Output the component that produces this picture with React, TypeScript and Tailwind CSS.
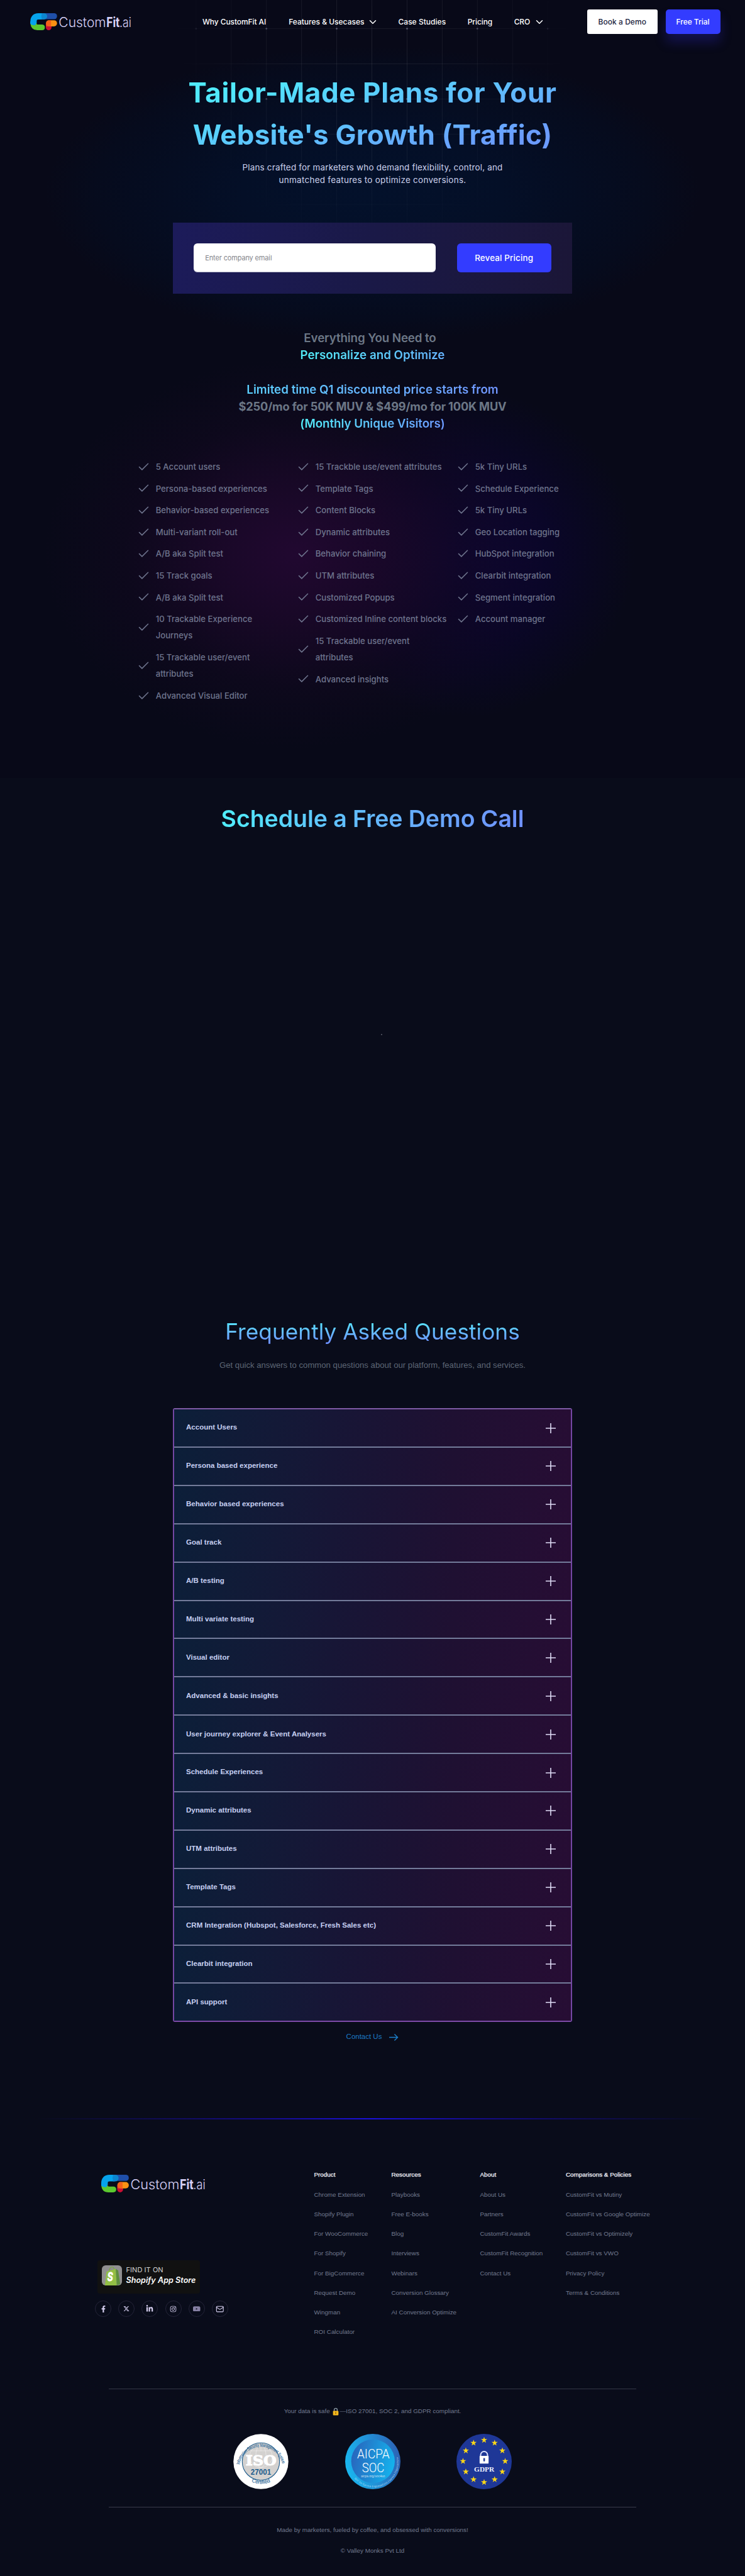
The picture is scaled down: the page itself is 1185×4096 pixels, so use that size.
import React from "react";
import { FaFacebookF, FaLinkedinIn, FaInstagram } from "react-icons/fa";
import { FaXTwitter } from "react-icons/fa6";
import { Check, ChevronDown, Mail } from "lucide-react";

const features: string[][][] = [
  [
    ["5 Account users"],
    ["Persona-based experiences"],
    ["Behavior-based experiences"],
    ["Multi-variant roll-out"],
    ["A/B aka Split test"],
    ["15 Track goals"],
    ["A/B aka Split test"],
    ["10 Trackable Experience", "Journeys"],
    ["15 Trackable user/event", "attributes"],
    ["Advanced Visual Editor"],
  ],
  [
    ["15 Trackble use/event attributes"],
    ["Template Tags"],
    ["Content Blocks"],
    ["Dynamic attributes"],
    ["Behavior chaining"],
    ["UTM attributes"],
    ["Customized Popups"],
    ["Customized Inline content blocks"],
    ["15 Trackable user/event", "attributes"],
    ["Advanced insights"],
  ],
  [
    ["5k Tiny URLs"],
    ["Schedule Experience"],
    ["5k Tiny URLs"],
    ["Geo Location tagging"],
    ["HubSpot integration"],
    ["Clearbit integration"],
    ["Segment integration"],
    ["Account manager"],
  ],
];

const faqs = [
  "Account Users",
  "Persona based experience",
  "Behavior based experiences",
  "Goal track",
  "A/B testing",
  "Multi variate testing",
  "Visual editor",
  "Advanced & basic insights",
  "User journey explorer & Event Analysers",
  "Schedule Experiences",
  "Dynamic attributes",
  "UTM attributes",
  "Template Tags",
  "CRM Integration (Hubspot, Salesforce, Fresh Sales etc)",
  "Clearbit integration",
  "API support",
];

const footerColumns = [
  {
    title: "Product",
    width: "w-[123px]",
    links: ["Chrome Extension", "Shopify Plugin", "For WooCommerce", "For Shopify", "For BigCommerce", "Request Demo", "Wingman", "ROI Calculator"],
  },
  {
    title: "Resources",
    width: "w-[141px]",
    links: ["Playbooks", "Free E-books", "Blog", "Interviews", "Webinars", "Conversion Glossary", "AI Conversion Optimize"],
  },
  {
    title: "About",
    width: "w-[136.5px]",
    links: ["About Us", "Partners", "CustomFit Awards", "CustomFit Recognition", "Contact Us"],
  },
  {
    title: "Comparisons & Policies",
    width: "w-[160px]",
    links: ["CustomFit vs Mutiny", "CustomFit vs Google Optimize", "CustomFit vs Optimizely", "CustomFit vs VWO", "Privacy Policy", "Terms & Conditions"],
  },
];

function Logo({ className }: { className: string }) {
  return (
    <svg viewBox="0 0 606 104" className={className + " overflow-visible"} aria-label="CustomFit.ai">
      <path d="M78 19H48Q19 19 19 50V60" fill="none" stroke="#06a3ec" strokeWidth="38" />
      <path d="M0 60H38Q36 68 46 68H70Q87 68 87 85T70 102H42Q4 102 0 60Z" fill="#5cc82f" />
      <path d="M0 62V50H34V62Q34 74 20 72Q4 70 0 62Z" fill="#06a3ec" />
      <rect x="68" y="0" width="92" height="36" rx="17" fill="#1f4fa9" />
      <path d="M68 0H82A18 18 0 0 1 82 38H68Z" fill="#0c86cf" />
      <path d="M93 62H127V85A17 17 0 0 1 93 85Z" fill="#cb0f33" />
      <rect x="94" y="42" width="66" height="37" rx="18" fill="#fb9113" />
      <path d="M112 42H124V79H94V60A18 18 0 0 1 112 42Z" fill="#f3511d" opacity="0.75" />
      <g fill="#d6d0f6" fontFamily="Inter, sans-serif" fontSize="80">
        <text x="170" y="83" textLength="284" lengthAdjust="spacingAndGlyphs" fontWeight="300">Custom</text>
        <text x="456" y="83" textLength="80" lengthAdjust="spacingAndGlyphs" fontWeight="700">Fit</text>
        <text x="534" y="83" textLength="71" lengthAdjust="spacingAndGlyphs" fontWeight="300">.ai</text>
      </g>
    </svg>
  );
}

function HeroGrid() {
  const xs = Array.from({ length: 12 }, (_, i) => 256 + i * 55.92);
  const ys = Array.from({ length: 8 }, (_, i) => 45.6 + i * 55.9);
  return (
    <svg className="absolute inset-x-0 top-0 h-[420px] w-full" viewBox="0 0 1185 420" aria-hidden="true">
      <defs>
        <radialGradient id="gridFade" gradientUnits="userSpaceOnUse" cx="592" cy="70" r="330">
          <stop offset="0" stopColor="#fff" />
          <stop offset="0.5" stopColor="#fff" stopOpacity="0.7" />
          <stop offset="1" stopColor="#fff" stopOpacity="0" />
        </radialGradient>
        <mask id="gridMask">
          <rect width="1185" height="420" fill="url(#gridFade)" />
        </mask>
      </defs>
      <g mask="url(#gridMask)">
        {xs.map((x) => (
          <path key={x} d={`M${x} 0V400`} stroke="#fff" strokeOpacity="0.09" />
        ))}
        {ys.map((y) => (
          <path key={y} d={`M250 ${y}H935`} stroke="#fff" strokeOpacity="0.08" />
        ))}
        {xs.filter((_, i) => i % 2 === 1).map((x) =>
          ys.filter((_, j) => j % 2 === 0).map((y) => <circle key={`${x}-${y}`} cx={x} cy={y} r="1.4" fill="#b9b6d8" fillOpacity="0.5" />),
        )}
      </g>
    </svg>
  );
}

function IsoBadge() {
  return (
    <svg viewBox="0 0 320 320" className="size-[88px]" aria-label="ISO 27001 certified">
      <defs>
        <path id="isoTop" d="M36 178A126 126 0 0 1 284 178" />
        <path id="isoBottom" d="M60 244A134 134 0 0 0 260 244" />
      </defs>
      <circle cx="160" cy="160" r="159" fill="#fff" />
      <circle cx="160" cy="160" r="108" fill="#d3d1cf" stroke="#1d5c8c" strokeWidth="4" />
      <g fill="none" stroke="#fff" strokeOpacity="0.5" strokeWidth="3">
        <ellipse cx="160" cy="130" rx="30" ry="65" />
        <ellipse cx="160" cy="130" rx="65" ry="65" />
        <path d="M160 65V100M103 98H217" />
      </g>
      <text x="72" y="180" textLength="178" lengthAdjust="spacingAndGlyphs" fill="#fff" stroke="#fff" strokeWidth="4" fontFamily="'DejaVu Serif', serif" fontWeight="700" fontSize="82">ISO</text>
      <text x="101" y="237" textLength="118" lengthAdjust="spacingAndGlyphs" fill="#1d5c8c" fontFamily="'Liberation Sans', sans-serif" fontWeight="700" fontSize="44">27001</text>
      <g fill="#2c6796" stroke="#2c6796" strokeWidth="0.6" fontFamily="'Liberation Sans', sans-serif">
        <text fontSize="27">
          <textPath href="#isoTop" textLength="345" lengthAdjust="spacingAndGlyphs">Information Security Management System</textPath>
        </text>
        <text fontSize="30">
          <textPath href="#isoBottom" startOffset="50%" textAnchor="middle">Certified</textPath>
        </text>
      </g>
    </svg>
  );
}

function AicpaBadge() {
  return (
    <svg viewBox="0 0 320 320" className="size-[88px]" aria-label="AICPA SOC">
      <defs>
        <linearGradient id="aicpaOuter" x1="0" y1="0.6" x2="1" y2="0.4">
          <stop offset="0" stopColor="#19b8f0" />
          <stop offset="0.5" stopColor="#228fd6" />
          <stop offset="1" stopColor="#2c62b4" />
        </linearGradient>
        <linearGradient id="aicpaInner" x1="0" y1="0.4" x2="1" y2="0.6">
          <stop offset="0" stopColor="#2866bd" />
          <stop offset="1" stopColor="#14b4ee" />
        </linearGradient>
        <path id="aicpaArc" d="M55 258A144 144 0 0 0 303 125" />
      </defs>
      <circle cx="160" cy="160" r="160" fill="url(#aicpaOuter)" />
      <circle cx="161" cy="158" r="126" fill="url(#aicpaInner)" />
      <g fill="#fff" fontFamily="Roboto, sans-serif" fontWeight="300">
        <text x="69" y="140" textLength="188" lengthAdjust="spacingAndGlyphs" fontSize="74">AICPA</text>
        <text x="97" y="222" textLength="130" lengthAdjust="spacingAndGlyphs" fontSize="74">SOC</text>
        <text x="92" y="252" textLength="138" lengthAdjust="spacingAndGlyphs" fontSize="18">aicpa.org/soc4so</text>
        <text fontSize="14" opacity="0.85">
          <textPath href="#aicpaArc" textLength="380">SOC for Service Organizations | Service Organizations</textPath>
        </text>
      </g>
    </svg>
  );
}

function GdprBadge() {
  const star = Array.from({ length: 10 }, (_, i) => {
    const r = i % 2 === 0 ? 19 : 7.5;
    const a = (Math.PI / 5) * i - Math.PI / 2;
    return `${(r * Math.cos(a)).toFixed(2)},${(r * Math.sin(a)).toFixed(2)}`;
  }).join(" ");
  return (
    <svg viewBox="0 0 320 320" className="size-[88px]" aria-label="GDPR compliant">
      <circle cx="160" cy="160" r="160" fill="#1e3797" />
      {Array.from({ length: 12 }, (_, i) => {
        const a = (Math.PI / 6) * i;
        return <polygon key={i} points={star} fill="#ffd816" transform={`translate(${160 + 122 * Math.sin(a)} ${158 - 122 * Math.cos(a)})`} />;
      })}
      <path d="M140 130V122A20 20 0 0 1 180 122V130" fill="none" stroke="#dfe4ff" strokeWidth="7" />
      <rect x="134" y="127" width="52" height="45" rx="3" fill="#fff" />
      <rect x="156" y="140" width="9" height="19" rx="3" fill="#1e3797" />
      <text x="102" y="218" textLength="117" lengthAdjust="spacingAndGlyphs" fill="#eef0ff" fontFamily="'Liberation Serif', serif" fontWeight="700" fontSize="38">GDPR</text>
    </svg>
  );
}

function ShopifyBadge() {
  return (
    <div className="flex h-[53px] w-[163px] items-start rounded-[4px] bg-[#111111] pl-[6.5px] pt-[8.5px]">
      <svg viewBox="0 0 116 116" className="size-[32px] shrink-0" aria-hidden="true">
        <rect width="116" height="116" rx="22" fill="#908f90" />
        <path d="M42 32Q46 8 60 10Q70 10 72 28" fill="none" stroke="#78a83a" strokeWidth="4" />
        <path d="M27 36L80 20L86 116H18Z" fill="#93bf45" />
        <path d="M80 20L94 30L106 108L86 116Z" fill="#5e8e3e" />
        <text x="32" y="92" fill="#fff" stroke="#fff" strokeWidth="3" fontFamily="Inter, sans-serif" fontWeight="700" fontStyle="italic" fontSize="66" textLength="32" lengthAdjust="spacingAndGlyphs">S</text>
      </svg>
      <div className="ml-[7px] whitespace-nowrap text-white">
        <p className="mt-[1px] text-[11px] leading-[13px] tracking-[0.06px] text-[#d2d2d2]">FIND IT ON</p>
        <p className="mt-[2px] text-[12.6px] font-semibold italic leading-[15px] tracking-[0.02px]">Shopify App Store</p>
      </div>
    </div>
  );
}

function Hero() {
  return (
    <section className="relative h-[1237px] overflow-hidden bg-[#080918]">
      <div className="absolute inset-0 bg-[radial-gradient(ellipse_520px_235px_at_592px_308px,#03112b_0%,#040f27_40%,#060b1d_85%,transparent_100%)]" />
      <div className="absolute inset-0 bg-[radial-gradient(ellipse_270px_260px_at_740px_880px,#0c0535_0%,#0a0628_50%,transparent_100%)]" />
      <div className="absolute inset-0 bg-[radial-gradient(ellipse_400px_310px_at_470px_880px,#210830_0%,#1b0829d9_35%,#12082080_68%,transparent_100%)]" />
      <HeroGrid />
      <div className="relative">
        <header className="flex h-[69.6px] items-center pl-[48px] pr-[39.5px] text-[12px] font-medium text-white">
          <Logo className="h-[27.6px] w-[161.3px]" />
          <nav className="ml-[112.6px] flex items-center whitespace-nowrap">
            <a className="tracking-[-0.09px]">Why CustomFit AI</a>
            <a className="ml-[36px] flex items-center">Features &amp; Usecases <ChevronDown className="ml-[5px] size-[18px]" /></a>
            <a className="ml-[31px] tracking-[0.03px]">Case Studies</a>
            <a className="ml-[34.5px] tracking-[-0.09px]">Pricing</a>
            <a className="ml-[34.5px] flex items-center tracking-[-0.09px]">CRO <ChevronDown className="ml-[6px] size-[18px]" /></a>
          </nav>
          <div className="ml-auto flex gap-[13px] whitespace-nowrap">
            <button className="h-[39px] w-[111.5px] rounded-[3px] bg-white tracking-[0.05px] text-[#1b2440]">Book a Demo</button>
            <button className="h-[39px] w-[87px] rounded-[5px] bg-[#333cff] tracking-[-0.05px] shadow-[0_13px_18px_rgba(45,38,190,0.32)]">Free Trial</button>
          </div>
        </header>

        <h1 className="mx-auto mt-[44.8px] w-[600px] bg-linear-[165deg,#50eafc_15%,#6b9bff_85%] bg-clip-text text-center text-[44px] font-bold leading-[66.7px] text-transparent">
          <span className="block whitespace-nowrap tracking-[0.6px]">Tailor-Made Plans for Your</span>
          <span className="block whitespace-nowrap tracking-[0.22px]">Website's Growth (Traffic)</span>
        </h1>
        <p className="mt-[7.8px] text-center text-[13.5px] leading-[20px] text-[#cbd0ec]">
          <span className="block tracking-[0.17px]">Plans crafted for marketers who demand flexibility, control, and</span>
          <span className="block tracking-[0.25px]">unmatched features to optimize conversions.</span>
        </p>

        <form className="mx-auto mt-[58.6px] flex h-[112.7px] w-[635px] justify-between bg-linear-[100deg,#1c1b5a,#1a1947_50%,#1b1637] px-[33.3px] pt-[33.2px]">
          <input
            className="h-[45.7px] w-[385px] rounded-[6px] border-b border-[#b6b9c9] bg-white px-[18px] text-[11px] tracking-[-0.15px] text-black placeholder:text-[#85868c]"
            placeholder="Enter company email"
          />
          <button type="button" className="h-[45.7px] w-[150px] rounded-[6px] bg-[#333cff] text-[13.4px] font-medium tracking-[0.15px] text-white">
            Reveal Pricing
          </button>
        </form>

        <h2 className="mt-[57.3px] flex flex-col items-center whitespace-nowrap text-[18.8px] font-semibold leading-[27.2px] text-[#6c7786]">
          <span className="pr-[8px] tracking-[-0.14px]">Everything You Need to</span>
          <span className="bg-linear-[100deg,#52edf8,#6aa6ff_120%] bg-clip-text tracking-[-0.01px] text-transparent">Personalize and Optimize</span>
          <span className="mt-[27.2px] bg-linear-[100deg,#5bd0ff_0%,#66b4ff_50%,#7094ff] bg-clip-text tracking-[0.01px] text-transparent">Limited time Q1 discounted price starts from</span>
          <span className="text-[18.2px] font-bold tracking-[-0.15px]">$250/mo for 50K MUV &amp; $499/mo for 100K MUV</span>
          <span className="bg-linear-[100deg,#52edf8,#6c98ff] bg-clip-text tracking-[-0.08px] text-transparent">(Monthly Unique Visitors)</span>
        </h2>

        <div className="ml-[218px] mt-[41.8px] flex text-[13.17px] font-medium leading-[26.35px] text-[#6e748d]">
          {features.map((column, i) => (
            <ul key={i} className="w-[254px] space-y-[8.22px]">
              {column.map((lines, j) => (
                <li key={j} className="flex items-center whitespace-nowrap">
                  <Check className="mr-[8.7px] size-[21px]" strokeWidth={1.8} />
                  <span>
                    {lines.map((line) => (
                      <span key={line} className="block">{line}</span>
                    ))}
                  </span>
                </li>
              ))}
            </ul>
          ))}
        </div>
      </div>
    </section>
  );
}

function Faq() {
  return (
    <section className="font-['Liberation_Sans',sans-serif]">
      <h2 className="mx-auto w-[480px] bg-linear-to-b from-[#55e4ff] from-20% to-[#6c92ff] to-85% bg-clip-text text-center font-['Inter',sans-serif] text-[35.2px] leading-[48px] tracking-[0.06px] text-transparent">
        Frequently Asked Questions
      </h2>
      <p className="mt-[19.3px] text-center text-[13.17px] leading-[20px] text-[#5d6675]">
        Get quick answers to common questions about our platform, features, and services.
      </p>
      <div className="mx-auto mt-[58.5px] w-[635px] rounded-[3px] border-x-2 border-y-2 border-x-[#7447a3] border-b-[#7d4aa8] border-t-[#7f5ba6]">
        {faqs.map((q, i) => (
          <div
            key={q}
            className={
              "flex items-center justify-between bg-linear-[102deg,#0c1f39_0%,#171636_40%,#1f1032_70%,#270d34_100%] pl-[19px] pr-[24.5px] text-[11.52px] font-bold text-[#c6cff2] " +
              (i < faqs.length - 1 ? "h-[60.9px] border-b-2 border-[#737b9a]" : "h-[58.9px]")
            }
          >
            <span className="-mt-[1px]">{q}</span>
            <svg viewBox="0 0 16 16" className="size-[16px]" aria-hidden="true">
              <path d="M0 8H16M8 0V16" stroke="#dfdcf6" strokeWidth="1.6" />
            </svg>
          </div>
        ))}
      </div>
      <a className="mt-[13px] mb-[1.5px] flex items-center justify-center text-[11.5px] leading-[20px] tracking-[-0.01px] text-[#1c7bc6]">
        Contact Us
        <svg viewBox="0 0 16 14" className="ml-[12px] mt-[2px] h-[13px] w-[15px]" fill="none" stroke="#1c80cc" strokeWidth="1.5" aria-hidden="true">
          <path d="M0 7H14M9 1.5L14.5 7L9 12.5" />
        </svg>
      </a>
    </section>
  );
}

function Footer() {
  const social = "flex size-[26px] items-center justify-center rounded-full border border-[#242438] text-[#d8d1f2]";
  return (
    <footer className="h-[728px] font-['Liberation_Sans',sans-serif] text-[9.875px] text-[#727a8f]">
      <div className="h-[2px] bg-linear-[90deg,transparent_5%,#140b86_35%,#1a10dc_50%,#140b86_65%,transparent_95%]" />
      <div className="flex h-[427.5px] pt-[72px]">
        <div className="w-[499.5px] shrink-0 pl-[151px] pt-[15.5px] font-['Inter',sans-serif]">
          <Logo className="ml-[10px] h-[28.5px] w-[166px]" />
          <div className="mt-[107.3px] pl-[4px]">
            <ShopifyBadge />
          </div>
          <div className="mt-[11.5px] flex gap-[11.2px]">
            <span className={social}><FaFacebookF size={11} /></span>
            <span className={social}><FaXTwitter size={10} /></span>
            <span className={social}><FaLinkedinIn size={12} /></span>
            <span className={social}><FaInstagram size={11} /></span>
            <span className={social}>
              <svg viewBox="0 0 14 10" className="h-[8.5px] w-[11.5px]" aria-hidden="true">
                <rect width="14" height="10" rx="2.5" fill="#8680a3" />
                <path d="M5.7 3.2L9 5L5.7 6.8Z" fill="#15152a" />
              </svg>
            </span>
            <span className={social}><Mail className="h-[13px] w-[13.5px]" strokeWidth={2} /></span>
          </div>
        </div>
        <div className="flex">
          {footerColumns.map((col) => (
            <div key={col.title} className={col.width + " whitespace-nowrap leading-[31.27px]"}>
              <h3 className="font-normal text-[#f1f2fa] [-webkit-text-stroke:0.25px_#f1f2fa]">{col.title}</h3>
              {col.links.map((l) => (
                <a key={l} className="block">{l}</a>
              ))}
            </div>
          ))}
        </div>
      </div>
      <div className="mx-auto flex w-[839.5px] flex-col items-center">
        <div className="h-px w-full bg-[#343646]" />
        <p className="mt-[26px] flex h-[20px] items-center whitespace-pre">
          Your data is safe{" "}
          <svg viewBox="0 0 18 24" className="mx-[1.5px] h-[13px] w-[10px]" aria-hidden="true">
            <path d="M4.5 11V7A4.5 4.5 0 0 1 13.5 7V11" fill="none" stroke="#8d9aa3" strokeWidth="2.6" />
            <rect x="1" y="10" width="16" height="13" rx="2" fill="#f5b81c" />
            <path d="M9 14V19" stroke="#7a5410" strokeWidth="2.4" />
          </svg>
          —ISO 27001, SOC 2, and GDPR compliant.
        </p>
        <div className="mt-[25px] flex gap-[89.5px]">
          <IsoBadge />
          <AicpaBadge />
          <GdprBadge />
        </div>
        <div className="mt-[28.5px] h-px w-full bg-[#3a3b4b]" />
        <p className="mt-[25.5px] leading-[20px]">Made by marketers, fueled by coffee, and obsessed with conversions!</p>
        <p className="mt-[12.9px] leading-[20px]">© Valley Monks Pvt Ltd</p>
      </div>
    </footer>
  );
}

export default function App() {
  return (
    <main className="h-[4096px] w-[1185px] overflow-hidden bg-[#090c1a] font-['Inter',sans-serif]">
      <Hero />
      <section className="h-[856.3px] pt-[39.5px]">
        <h2 className="mx-auto w-[490px] whitespace-nowrap bg-linear-[100deg,#4ff0fb_0%,#5fc4ff_35%,#7090ff] bg-clip-text text-center text-[37.5px] font-semibold leading-[50px] tracking-[-0.06px] text-transparent">
          Schedule a Free Demo Call
        </h2>
        <div className="ml-[606px] mt-[317.5px] size-[2px] rounded-full bg-[#5a5c68]" />
      </section>
      <Faq />
      <div className="h-[118.5px]" />
      <Footer />
    </main>
  );
}
